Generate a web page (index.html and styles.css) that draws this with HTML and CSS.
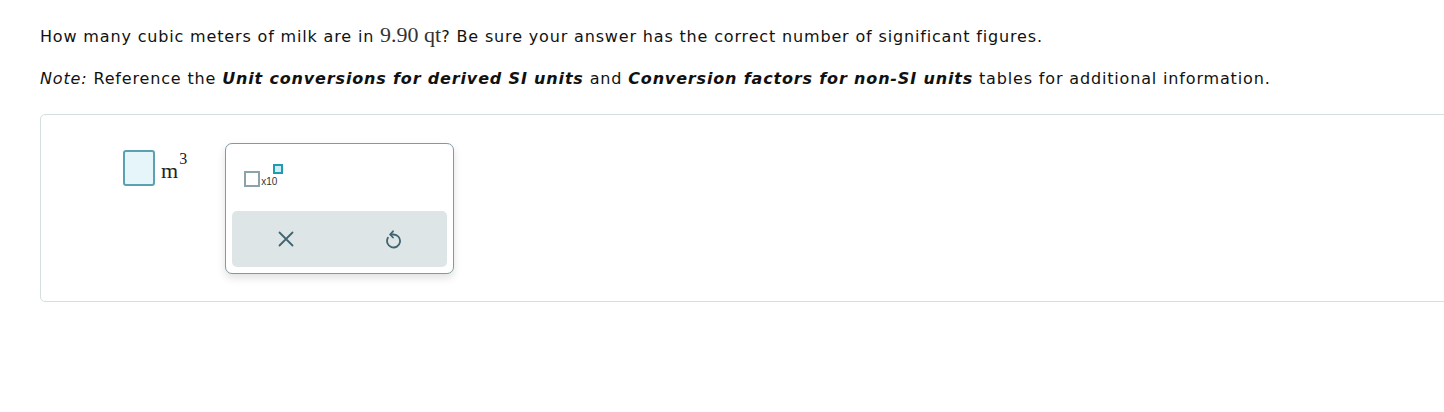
FILE: index.html
```html
<!DOCTYPE html>
<html>
<head>
<meta charset="utf-8">
<link rel="stylesheet" href="styles.css">
</head>
<body>
<main class="page">
  <p class="question">How many cubic meters of milk are in <span class="math">9.90 qt</span>? Be sure your answer has the correct number of significant figures.</p>
  <p class="note"><em>Note:</em> Reference the <b><i>Unit conversions for derived SI units</i></b> and <b><i>Conversion factors for non-SI units</i></b> tables for additional information.</p>
  <section class="card">
    <div class="answer">
      <span class="input-box"></span>
      <span class="unit">m<sup>3</sup></span>
    </div>
    <div class="palette">
      <div class="tools">
        <span class="sci">
          <span class="sci-box"></span><span class="sci-x">x10</span><span class="sci-exp"></span>
        </span>
      </div>
      <div class="actions">
        <button class="act" aria-label="clear">
          <svg width="18" height="18" viewBox="0 0 18 18"><path d="M2.5 2.5 L15.5 15.5 M15.5 2.5 L2.5 15.5" stroke="#3f6570" stroke-width="1.8" fill="none" stroke-linecap="round"/></svg>
        </button>
        <button class="act" aria-label="undo">
          <svg width="18" height="20" viewBox="0 0 18 20"><path d="M6.5 5.5 L9.5 5.5 A6.5 6.5 0 1 1 3.9 8.8" stroke="#3f6570" stroke-width="1.8" fill="none" stroke-linecap="round"/><path d="M9 2.3 L6.2 5.5 L9 8.5" stroke="#3f6570" stroke-width="1.8" fill="none" stroke-linecap="round" stroke-linejoin="round"/></svg>
        </button>
      </div>
    </div>
  </section>
</main>
</body>
</html>
```
FILE: styles.css
```css
html, body {
  margin: 0;
  padding: 0;
  background: #fff;
  overflow: hidden;
}
.page {
  padding: 19px 0 0 40px;
  font-family: "DejaVu Sans", Verdana, sans-serif;
  font-size: 16px;
  letter-spacing: 0.84px;
  color: #111;
}
.question {
  margin: 0;
  line-height: 32px;
}
.math {
  font-family: "Liberation Serif", "Times New Roman", serif;
  font-size: 22px;
  letter-spacing: 0;
  color: #333;
}
.note {
  margin: 10px 0 0;
  line-height: 32px;
}
.note em {
  font-style: italic;
}
.card {
  margin-top: 19px;
  width: 1440px;
  height: 188px;
  border: 1px solid #d4dfdf;
  border-radius: 5px;
  display: flex;
  align-items: flex-start;
  padding: 28px 0 0 82px;
  box-sizing: border-box;
  letter-spacing: 0;
}
.answer {
  display: flex;
  align-items: flex-start;
  margin-top: 7px;
}
.input-box {
  width: 28px;
  height: 32px;
  border: 2px solid #5aa2b2;
  border-radius: 3px;
  background: #e6f5f9;
}
.unit {
  font-family: "Liberation Serif", "Times New Roman", serif;
  font-size: 22px;
  color: #222;
  margin-left: 6px;
  margin-top: 9px;
  line-height: 24px;
  position: relative;
}
.unit sup {
  font-size: 16px;
  line-height: 16px;
  vertical-align: baseline;
  position: relative;
  top: -14px;
  margin-left: 1px;
}
.palette {
  margin-left: 38px;
  width: 229px;
  height: 131px;
  box-sizing: border-box;
  border: 1px solid #7f9ba1;
  border-radius: 7px;
  background: #fff;
  box-shadow: 0 4px 8px rgba(0, 0, 0, 0.12);
  padding: 0 6px 6px;
  display: flex;
  flex-direction: column;
}
.tools {
  height: 67px;
  display: flex;
  align-items: flex-start;
  padding: 19px 0 0 12px;
  box-sizing: border-box;
}
.sci {
  display: flex;
  align-items: flex-end;
  height: 24px;
}
.sci-box {
  width: 12px;
  height: 12px;
  border: 2px solid #8ba3a9;
  background: #fff;
}
.sci-x {
  font-family: "Liberation Sans", Arial, sans-serif;
  font-size: 10px;
  color: #333;
  line-height: 10px;
  margin-left: 1px;
}
.sci-exp {
  align-self: flex-start;
  margin-top: 1px;
  width: 6px;
  height: 6px;
  border: 2px solid #1f9bb2;
  background: #cdeef5;
  margin-left: -4px;
}
.actions {
  flex: 1;
  background: #dee5e7;
  border-radius: 5px;
  display: flex;
  align-items: center;
}
.act {
  flex: 1;
  background: none;
  border: 0;
  padding: 0;
  height: 100%;
  display: flex;
  align-items: center;
  justify-content: center;
}
```
